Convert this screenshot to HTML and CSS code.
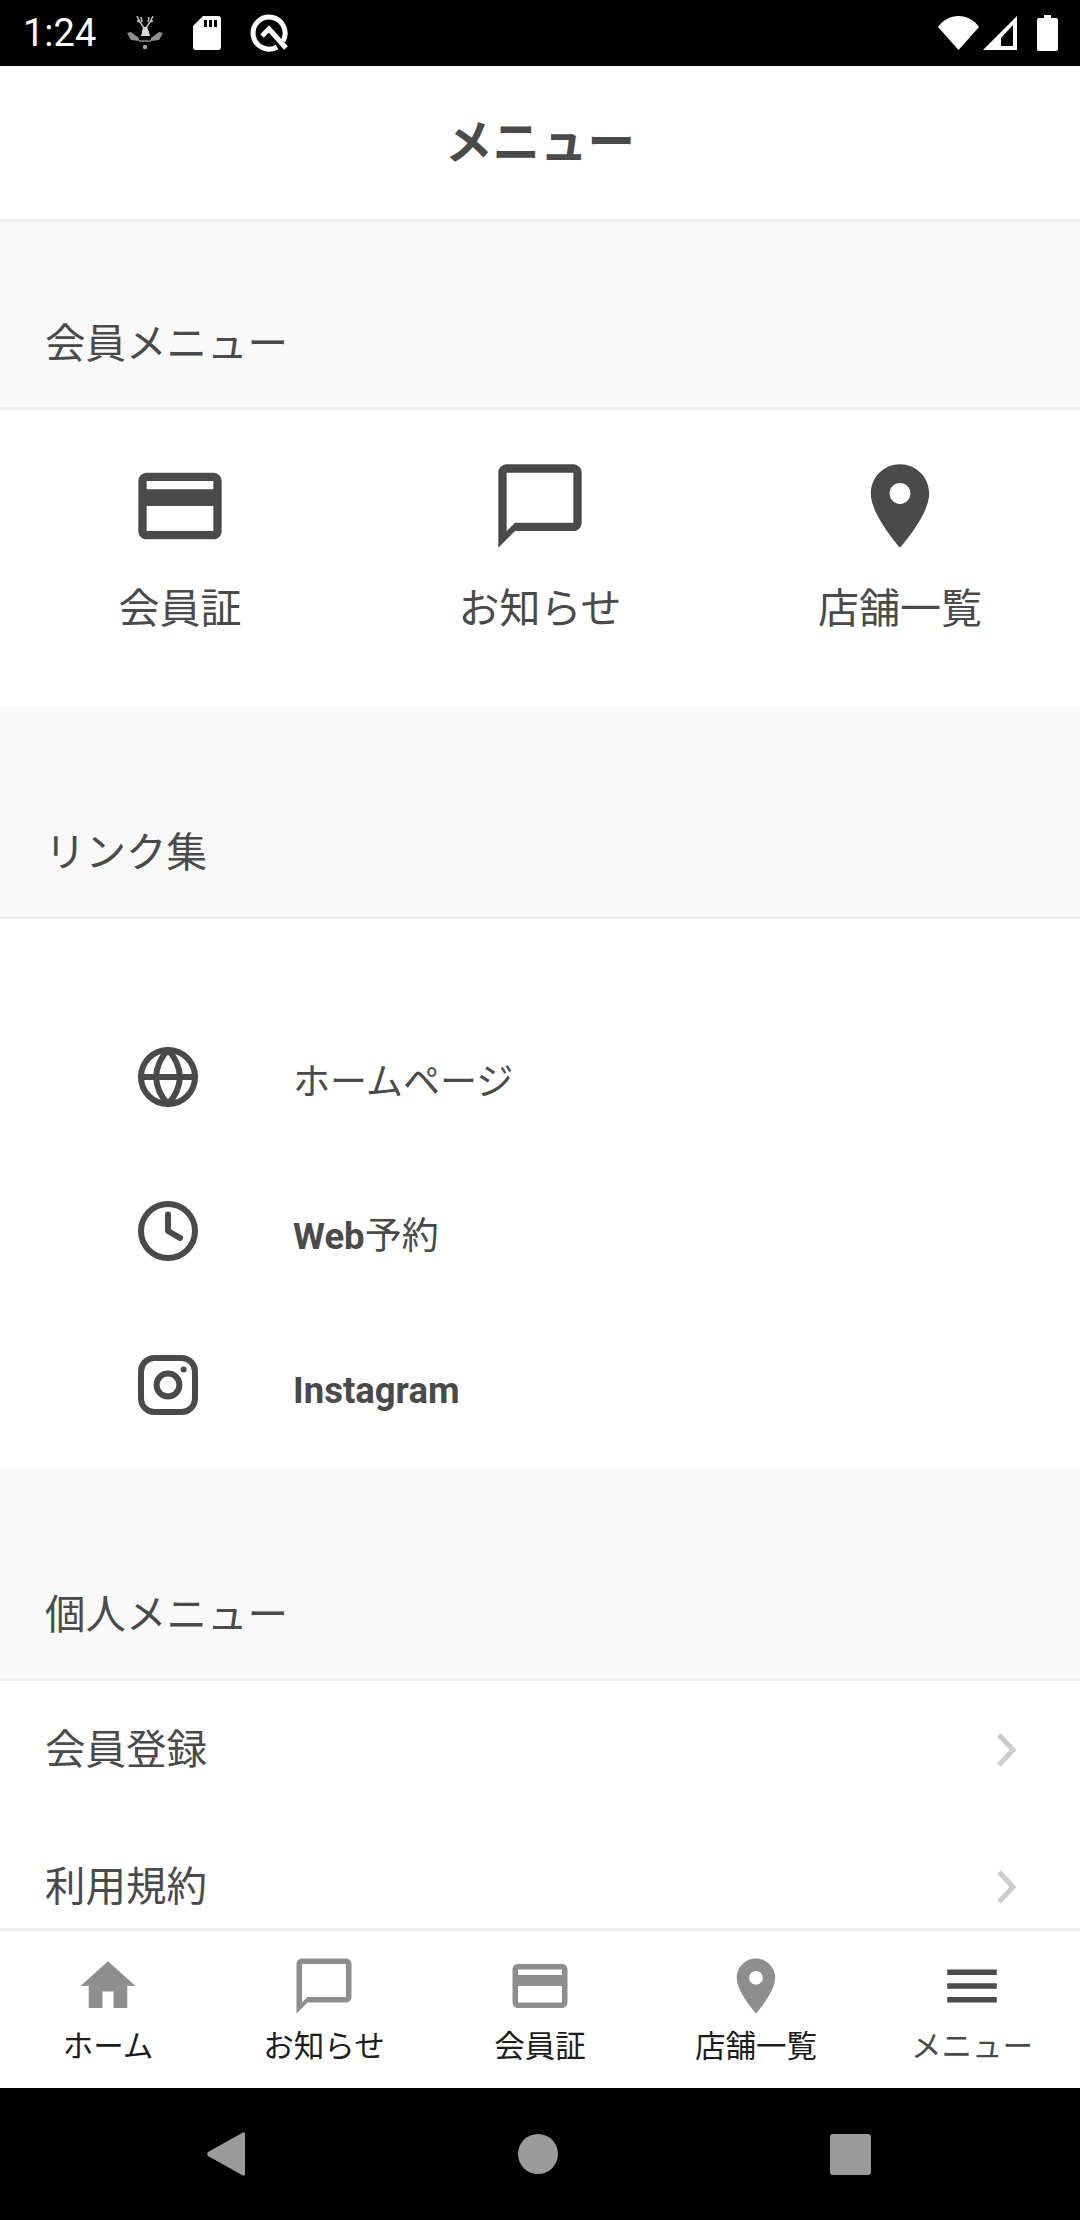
FILE: index.html
```html
<!DOCTYPE html>
<html lang="ja">
<head>
    <meta charset="UTF-8">
    <meta name="viewport" content="width=device-width, initial-scale=1.0">
    <title>メニュー</title>
    <link rel="stylesheet" href="styles.css">
</head>
<body>
<svg class="sprites" width="0" height="0">
    <symbol id="i-card" viewBox="0 0 24 24"><path d="M20 4H4c-1.11 0-1.99.89-1.99 2L2 18c0 1.11.89 2 2 2h16c1.11 0 2-.89 2-2V6c0-1.11-.89-2-2-2zm0 14H4v-6h16v6zm0-10H4V6h16v2z"/></symbol>
    <symbol id="i-chat" viewBox="0 0 24 24"><path d="M20 2H4c-1.1 0-2 .9-2 2v18l4-4h14c1.1 0 2-.9 2-2V4c0-1.1-.9-2-2-2zm0 14H6l-2 2V4h16v12z"/></symbol>
    <symbol id="i-place" viewBox="0 0 24 24"><path d="M12 2C8.13 2 5 5.13 5 9c0 5.25 7 13 7 13s7-7.75 7-13c0-3.87-3.13-7-7-7zm0 9.5c-1.38 0-2.5-1.12-2.5-2.5s1.12-2.5 2.5-2.5 2.5 1.12 2.5 2.5-1.12 2.5-2.5 2.5z"/></symbol>
    <symbol id="i-home" viewBox="0 0 24 24"><path d="M10 20v-6h4v6h5v-8h3L12 3 2 12h3v8z"/></symbol>
    <symbol id="i-menu" viewBox="0 0 24 24"><path d="M3 18h18v-2H3v2zm0-5h18v-2H3v2zm0-7v2h18V6H3z"/></symbol>
</svg>

<header class="status-bar">
    <span class="status-time">1:24</span>
    <svg class="status-deer" width="38" height="36" viewBox="0 0 38 36">
        <path d="M11 1l3 6 4 6M14 7l-3-1M15 2l1 5M27 1l-3 6-4 6M24 7l3-1M23 2l-1 5" fill="none" stroke="#bdbdbd" stroke-width="1.500"/>
        <path d="M17 12h4l2 5 1 4h-9l1-4z" fill="#d8d8d8"/>
        <path d="M1 18l4-1 8 6v3l-8-1zM37 18l-4-1-8 6v3l8-1z" fill="#8f8f8f"/>
        <path d="M13 25h12v2H13z" fill="#666"/>
        <circle cx="19" cy="32" r="2.200" fill="#a8a8a8"/>
    </svg>
    <svg class="status-sd" width="28" height="34" viewBox="0 0 28 34">
        <path d="M10 0h15a3 3 0 0 1 3 3v28a3 3 0 0 1-3 3H3a3 3 0 0 1-3-3V10z" fill="#fff"/>
        <path d="M11 4h3v7h-3zM16 4h3v7h-3zM21 4h3v7h-3z" fill="#000"/>
    </svg>
    <svg class="status-q" width="38" height="38" viewBox="0 0 38 38">
        <path d="M27 33A16 16 0 1 1 33 27" fill="none" stroke="#fff" stroke-width="5"/>
        <path d="M12 22l7-7 17 19" fill="none" stroke="#fff" stroke-width="5"/>
    </svg>
    <span class="status-space"></span>
    <svg class="status-wifi" width="41" height="34" viewBox="0 0 41 34">
        <path d="M0 11C5 4 12 0 20.500 0S36 4 41 11L20.500 34z" fill="#fff"/>
    </svg>
    <svg class="status-cell" width="34" height="34" viewBox="0 0 34 34">
        <path fill-rule="evenodd" d="M34 0v34H0zM30 9L18 22v8h12z" fill="#fff"/>
    </svg>
    <svg class="status-battery" width="21" height="36" viewBox="0 0 21 36">
        <path d="M7 0h7v3h5a2 2 0 0 1 2 2v29a2 2 0 0 1-2 2H2a2 2 0 0 1-2-2V5a2 2 0 0 1 2-2h5z" fill="#fff"/>
    </svg>
</header>

<div class="title-bar">メニュー</div>

<main class="content">
    <h2 class="section-head section-head-first">会員メニュー</h2>
    <section class="shortcuts">
        <a class="shortcut"><svg class="shortcut-icon"><use href="#i-card"/></svg><span>会員証</span></a>
        <a class="shortcut"><svg class="shortcut-icon"><use href="#i-chat"/></svg><span>お知らせ</span></a>
        <a class="shortcut"><svg class="shortcut-icon"><use href="#i-place"/></svg><span>店舗一覧</span></a>
    </section>

    <h2 class="section-head">リンク集</h2>
    <section class="links">
        <a class="link-row">
            <svg class="link-icon" viewBox="0 0 24 24"><circle cx="12" cy="12" r="9"/><path d="M3 12h18M12 3a14 14 0 0 1 4 9 14 14 0 0 1-4 9 14 14 0 0 1-4-9 14 14 0 0 1 4-9z"/></svg>
            <span class="link-text">ホームページ</span>
        </a>
        <a class="link-row">
            <svg class="link-icon" viewBox="0 0 24 24"><circle cx="12" cy="12" r="9"/><path d="M12 6.500V12l4 2.300"/></svg>
            <span class="link-text"><b>Web</b>予約</span>
        </a>
        <a class="link-row">
            <svg class="link-icon" viewBox="0 0 24 24"><rect x="3" y="3" width="18" height="18" rx="4.500"/><circle cx="12" cy="12" r="3.800"/><circle class="link-dot" cx="17.200" cy="6.800" r="1"/></svg>
            <span class="link-text"><b>Instagram</b></span>
        </a>
    </section>

    <h2 class="section-head">個人メニュー</h2>
    <section class="personal">
        <a class="personal-row"><span>会員登録</span><svg class="chevron" width="22" height="34" viewBox="0 0 22 34"><path d="M3 2l14 15L3 32"/></svg></a>
        <a class="personal-row"><span>利用規約</span><svg class="chevron" width="22" height="34" viewBox="0 0 22 34"><path d="M3 2l14 15L3 32"/></svg></a>
    </section>
</main>

<nav class="tabs">
    <a class="tab"><svg class="tab-icon"><use href="#i-home"/></svg><span>ホーム</span></a>
    <a class="tab"><svg class="tab-icon"><use href="#i-chat"/></svg><span>お知らせ</span></a>
    <a class="tab"><svg class="tab-icon"><use href="#i-card"/></svg><span>会員証</span></a>
    <a class="tab"><svg class="tab-icon"><use href="#i-place"/></svg><span>店舗一覧</span></a>
    <a class="tab tab-active"><svg class="tab-icon"><use href="#i-menu"/></svg><span>メニュー</span></a>
</nav>

<footer class="nav-bar">
    <svg width="38" height="44" viewBox="0 0 38 44"><path d="M38 2v40c0 2-2 2-3 1L1 24c-1-1-1-3 0-4L35 1c1-1 3-1 3 1z" fill="#9b9b9b"/></svg>
    <span class="nav-circle"></span>
    <span class="nav-square"></span>
</footer>
</body>
</html>
```

FILE: styles.css
```css
* {
    box-sizing: border-box;
}
html, body {
    margin: 0;
    height: 2220px;
}
body {
    display: flex;
    flex-direction: column;
    overflow: hidden;
    background-color: #fff;
    color: #4a4a4a;
    font-family: Roboto, "Noto Sans CJK JP", sans-serif;
}
.sprites {
    display: block;
    height: 0;
}

/* status bar */
.status-bar {
    display: flex;
    align-items: center;
    flex: none;
    height: 66px;
    padding: 0 22px 0 23px;
    background-color: #000;
    color: #fff;
}
.status-time {
    width: 103px;
    font-size: 38px;
    line-height: 66px;
}
.status-deer {
    margin-right: 29px;
}
.status-sd {
    margin-right: 29px;
}
.status-space {
    flex: 1;
}
.status-wifi {
    margin-right: 4px;
}
.status-cell {
    margin-right: 20px;
}

/* title */
.title-bar {
    flex: none;
    height: 156px;
    border-bottom: 3px solid #efefef;
    font-size: 47.5px;
    font-weight: 700;
    line-height: 155px;
    text-align: center;
}

/* scrolling part */
.content {
    flex: 1;
    min-height: 0;
    overflow: hidden;
}
.section-head {
    display: flex;
    align-items: flex-end;
    height: 213px;
    margin: 0;
    padding: 0 45px 34px;
    background-color: #f9f9f9;
    border-bottom: 3px solid #efefef;
    font-size: 40.500px;
    font-weight: 400;
    line-height: 58px;
}
.section-head-first {
    height: 188px;
}
.shortcuts {
    display: grid;
    grid-template-columns: repeat(3, 1fr);
    height: 296px;
    padding-top: 46px;
}
.shortcut {
    display: flex;
    flex-direction: column;
    align-items: center;
    font-size: 41px;
    line-height: 58px;
}
.shortcut-icon {
    width: 100px;
    height: 100px;
    margin-bottom: 24px;
    fill: #4a4a4a;
}
.links {
    height: 549px;
    padding-top: 81px;
}
.link-row {
    display: flex;
    align-items: center;
    height: 154px;
    padding-left: 132px;
}
.link-icon {
    width: 72px;
    height: 72px;
    margin-right: 89px;
    fill: none;
    stroke: #4a4a4a;
    stroke-width: 2;
    stroke-linecap: round;
    stroke-linejoin: round;
}
.link-dot {
    fill: #4a4a4a;
    stroke: none;
}
.link-text {
    padding-top: 12px;
    font-size: 37px;
    line-height: 52px;
}
.link-text b {
    font-size: 36.500px;
}
.personal-row {
    display: flex;
    align-items: center;
    justify-content: space-between;
    height: 137px;
    padding: 0 62px 0 45px;
    font-size: 40.500px;
    line-height: 58px;
}
.chevron {
    fill: none;
    stroke: #ccc;
    stroke-width: 5;
}

/* bottom tabs */
.tabs {
    display: grid;
    grid-template-columns: repeat(5, 1fr);
    flex: none;
    height: 160px;
    padding-top: 22px;
    border-top: 3px solid #efefef;
    background-color: #fff;
}
.tab {
    display: flex;
    flex-direction: column;
    align-items: center;
    color: #1c1c1c;
    font-size: 30.500px;
    line-height: 42px;
}
.tab-icon {
    width: 66px;
    height: 66px;
    margin-bottom: 7px;
    fill: #8e8e8e;
}
.tab-active {
    color: #4a4a4a;
}
.tab-active .tab-icon {
    fill: #4a4a4a;
}

/* android nav bar */
.nav-bar {
    display: flex;
    align-items: center;
    justify-content: space-between;
    flex: none;
    height: 132px;
    padding: 0 209px 0 207px;
    background-color: #000;
}
.nav-circle {
    width: 40px;
    height: 40px;
    border-radius: 50%;
    background-color: #9b9b9b;
}
.nav-square {
    width: 41px;
    height: 41px;
    border-radius: 3px;
    background-color: #9b9b9b;
}
```
